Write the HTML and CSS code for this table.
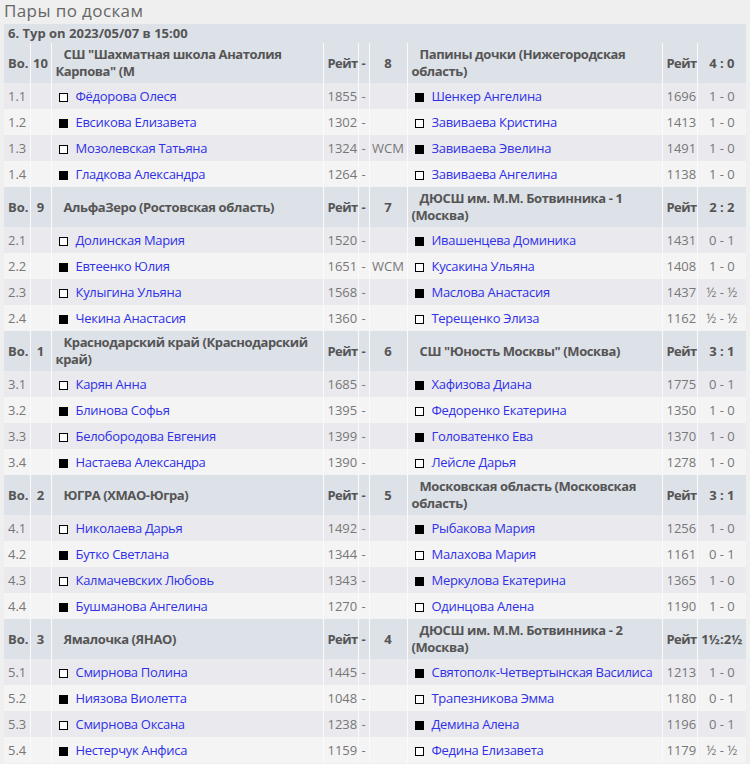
FILE: index.html
```html
<!DOCTYPE html>
<html lang="ru">
<head>
<meta charset="utf-8">
<title>Пары по доскам</title>
<link rel="stylesheet" href="styles.css">
</head>
<body>
<div class="page">
<h2 class="heading">Пары по доскам</h2>
<table class="pairs">
<colgroup>
<col class="c-bo"><col class="c-no"><col class="c-name"><col class="c-rtg"><col class="c-dash"><col class="c-no2"><col class="c-name2"><col class="c-rtg"><col class="c-res">
</colgroup>
<tr class="round"><td colspan="9">6. Тур on 2023/05/07 в 15:00</td></tr>

<tr class="team">
<td>Во.</td><td class="ctr">10</td><td class="tname">СШ "Шахматная школа Анатолия Карпова" (М</td><td class="rt">Рейт</td><td class="ctr">-</td><td class="ctr">8</td><td class="tname">Папины дочки (Нижегородская область)</td><td class="rt">Рейт</td><td class="ctr">4 : 0</td>
</tr>
<tr class="odd"><td>1.1</td><td></td><td><span class="sq w"></span><a href="#">Фёдорова Олеся</a></td><td>1855</td><td class="ctr">-</td><td class="ctr"></td><td><span class="sq b"></span><a href="#">Шенкер Ангелина</a></td><td>1696</td><td class="ctr">1 - 0</td></tr>
<tr class="even"><td>1.2</td><td></td><td><span class="sq b"></span><a href="#">Евсикова Елизавета</a></td><td>1302</td><td class="ctr">-</td><td class="ctr"></td><td><span class="sq w"></span><a href="#">Завиваева Кристина</a></td><td>1413</td><td class="ctr">1 - 0</td></tr>
<tr class="odd"><td>1.3</td><td></td><td><span class="sq w"></span><a href="#">Мозолевская Татьяна</a></td><td>1324</td><td class="ctr">-</td><td class="ctr">WCM</td><td><span class="sq b"></span><a href="#">Завиваева Эвелина</a></td><td>1491</td><td class="ctr">1 - 0</td></tr>
<tr class="even"><td>1.4</td><td></td><td><span class="sq b"></span><a href="#">Гладкова Александра</a></td><td>1264</td><td class="ctr">-</td><td class="ctr"></td><td><span class="sq w"></span><a href="#">Завиваева Ангелина</a></td><td>1138</td><td class="ctr">1 - 0</td></tr>

<tr class="team">
<td>Во.</td><td class="ctr">9</td><td class="tname">АльфаЗеро (Ростовская область)</td><td class="rt">Рейт</td><td class="ctr">-</td><td class="ctr">7</td><td class="tname">ДЮСШ им. М.М. Ботвинника - 1 (Москва)</td><td class="rt">Рейт</td><td class="ctr">2 : 2</td>
</tr>
<tr class="odd"><td>2.1</td><td></td><td><span class="sq w"></span><a href="#">Долинская Мария</a></td><td>1520</td><td class="ctr">-</td><td class="ctr"></td><td><span class="sq b"></span><a href="#">Ивашенцева Доминика</a></td><td>1431</td><td class="ctr">0 - 1</td></tr>
<tr class="even"><td>2.2</td><td></td><td><span class="sq b"></span><a href="#">Евтеенко Юлия</a></td><td>1651</td><td class="ctr">-</td><td class="ctr">WCM</td><td><span class="sq w"></span><a href="#">Кусакина Ульяна</a></td><td>1408</td><td class="ctr">1 - 0</td></tr>
<tr class="odd"><td>2.3</td><td></td><td><span class="sq w"></span><a href="#">Кулыгина Ульяна</a></td><td>1568</td><td class="ctr">-</td><td class="ctr"></td><td><span class="sq b"></span><a href="#">Маслова Анастасия</a></td><td>1437</td><td class="ctr">½ - ½</td></tr>
<tr class="even"><td>2.4</td><td></td><td><span class="sq b"></span><a href="#">Чекина Анастасия</a></td><td>1360</td><td class="ctr">-</td><td class="ctr"></td><td><span class="sq w"></span><a href="#">Терещенко Элиза</a></td><td>1162</td><td class="ctr">½ - ½</td></tr>

<tr class="team">
<td>Во.</td><td class="ctr">1</td><td class="tname">Краснодарский край (Краснодарский край)</td><td class="rt">Рейт</td><td class="ctr">-</td><td class="ctr">6</td><td class="tname">СШ "Юность Москвы" (Москва)</td><td class="rt">Рейт</td><td class="ctr">3 : 1</td>
</tr>
<tr class="odd"><td>3.1</td><td></td><td><span class="sq w"></span><a href="#">Карян Анна</a></td><td>1685</td><td class="ctr">-</td><td class="ctr"></td><td><span class="sq b"></span><a href="#">Хафизова Диана</a></td><td>1775</td><td class="ctr">0 - 1</td></tr>
<tr class="even"><td>3.2</td><td></td><td><span class="sq b"></span><a href="#">Блинова Софья</a></td><td>1395</td><td class="ctr">-</td><td class="ctr"></td><td><span class="sq w"></span><a href="#">Федоренко Екатерина</a></td><td>1350</td><td class="ctr">1 - 0</td></tr>
<tr class="odd"><td>3.3</td><td></td><td><span class="sq w"></span><a href="#">Белобородова Евгения</a></td><td>1399</td><td class="ctr">-</td><td class="ctr"></td><td><span class="sq b"></span><a href="#">Головатенко Ева</a></td><td>1370</td><td class="ctr">1 - 0</td></tr>
<tr class="even"><td>3.4</td><td></td><td><span class="sq b"></span><a href="#">Настаева Александра</a></td><td>1390</td><td class="ctr">-</td><td class="ctr"></td><td><span class="sq w"></span><a href="#">Лейсле Дарья</a></td><td>1278</td><td class="ctr">1 - 0</td></tr>

<tr class="team">
<td>Во.</td><td class="ctr">2</td><td class="tname">ЮГРА (ХМАО-Югра)</td><td class="rt">Рейт</td><td class="ctr">-</td><td class="ctr">5</td><td class="tname">Московская область (Московская область)</td><td class="rt">Рейт</td><td class="ctr">3 : 1</td>
</tr>
<tr class="odd"><td>4.1</td><td></td><td><span class="sq w"></span><a href="#">Николаева Дарья</a></td><td>1492</td><td class="ctr">-</td><td class="ctr"></td><td><span class="sq b"></span><a href="#">Рыбакова Мария</a></td><td>1256</td><td class="ctr">1 - 0</td></tr>
<tr class="even"><td>4.2</td><td></td><td><span class="sq b"></span><a href="#">Бутко Светлана</a></td><td>1344</td><td class="ctr">-</td><td class="ctr"></td><td><span class="sq w"></span><a href="#">Малахова Мария</a></td><td>1161</td><td class="ctr">0 - 1</td></tr>
<tr class="odd"><td>4.3</td><td></td><td><span class="sq w"></span><a href="#">Калмачевских Любовь</a></td><td>1343</td><td class="ctr">-</td><td class="ctr"></td><td><span class="sq b"></span><a href="#">Меркулова Екатерина</a></td><td>1365</td><td class="ctr">1 - 0</td></tr>
<tr class="even"><td>4.4</td><td></td><td><span class="sq b"></span><a href="#">Бушманова Ангелина</a></td><td>1270</td><td class="ctr">-</td><td class="ctr"></td><td><span class="sq w"></span><a href="#">Одинцова Алена</a></td><td>1190</td><td class="ctr">1 - 0</td></tr>

<tr class="team">
<td>Во.</td><td class="ctr">3</td><td class="tname">Ямалочка (ЯНАО)</td><td class="rt">Рейт</td><td class="ctr">-</td><td class="ctr">4</td><td class="tname">ДЮСШ им. М.М. Ботвинника - 2 (Москва)</td><td class="rt">Рейт</td><td class="ctr">1½:2½</td>
</tr>
<tr class="odd"><td>5.1</td><td></td><td><span class="sq w"></span><a href="#">Смирнова Полина</a></td><td>1445</td><td class="ctr">-</td><td class="ctr"></td><td><span class="sq b"></span><a href="#">Святополк-Четвертынская Василиса</a></td><td>1213</td><td class="ctr">1 - 0</td></tr>
<tr class="even"><td>5.2</td><td></td><td><span class="sq b"></span><a href="#">Ниязова Виолетта</a></td><td>1048</td><td class="ctr">-</td><td class="ctr"></td><td><span class="sq w"></span><a href="#">Трапезникова Эмма</a></td><td>1180</td><td class="ctr">0 - 1</td></tr>
<tr class="odd"><td>5.3</td><td></td><td><span class="sq w"></span><a href="#">Смирнова Оксана</a></td><td>1238</td><td class="ctr">-</td><td class="ctr"></td><td><span class="sq b"></span><a href="#">Демина Алена</a></td><td>1196</td><td class="ctr">0 - 1</td></tr>
<tr class="even"><td>5.4</td><td></td><td><span class="sq b"></span><a href="#">Нестерчук Анфиса</a></td><td>1159</td><td class="ctr">-</td><td class="ctr"></td><td><span class="sq w"></span><a href="#">Федина Елизавета</a></td><td>1179</td><td class="ctr">½ - ½</td></tr>
</table>
</div>
</body>
</html>
```

FILE: styles.css
```css
html, body {
  margin: 0;
  padding: 0;
  background: #efefef;
}
body {
  font-family: "Open Sans", "Liberation Sans", sans-serif;
  font-size: 13px;
  color: #777;
}
.page {
  padding: 0 4px;
}
.heading {
  margin: 0 0 2px 0;
  font-size: 17px;
  line-height: 22px;
  font-weight: normal;
  letter-spacing: 0.4px;
  color: #666;
}
.pairs {
  width: 742px;
  table-layout: fixed;
  border-collapse: collapse;
}
.c-bo { width: 26px; }
.c-no { width: 21px; }
.c-name { width: 272px; }
.c-rtg { width: 35px; }
.c-dash { width: 11px; }
.c-no2 { width: 38px; }
.c-name2 { width: 255px; }
.c-res { width: 49px; }

.pairs td {
  padding: 0 0 0 4px;
  line-height: 17px;
  white-space: nowrap;
  vertical-align: middle;
  border-left: 1px solid #fafafc;
}
.pairs td:first-child {
  border-left: none;
}
.pairs td.ctr {
  text-align: center;
  padding: 0;
}
.round td {
  background: #dde1e8;
  height: 19px;
  font-weight: bold;
  color: #555;
  line-height: 19px;
}
.team td {
  background: #dde1e8;
  height: 40px;
  font-weight: bold;
  color: #555;
}
.team td.tname {
  white-space: normal;
  text-indent: 8px;
  letter-spacing: -0.4px;
  padding-right: 2px;
}
.team td.rt {
  letter-spacing: -0.6px;
}
.odd td {
  background: #eaeaee;
  height: 26px;
}
.even td {
  background: #f4f4f4;
  height: 26px;
}
.pairs a {
  color: #3030e8;
  text-decoration: none;
  letter-spacing: -0.3px;
}
.sq {
  display: inline-block;
  width: 9px;
  height: 9px;
  box-sizing: border-box;
  margin: 0 8px 0 3px;
  vertical-align: -1px;
}
.sq.w {
  background: #fff;
  border: 1px solid #000;
}
.sq.b {
  background: #000;
  border: 1px solid #000;
}
```
